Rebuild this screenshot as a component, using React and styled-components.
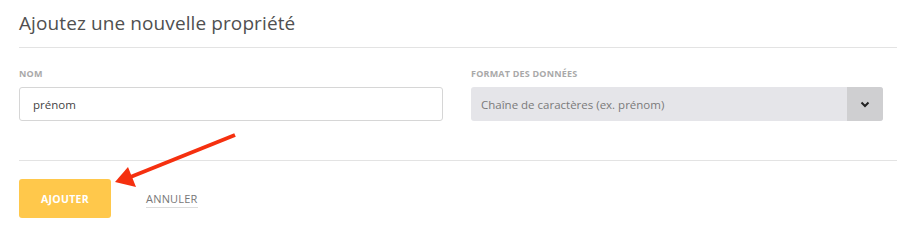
import React from "react";
import styled, { createGlobalStyle } from "styled-components";

const Global = createGlobalStyle`
  html, body { margin: 0; padding: 0; background: #fff; }
  body { font-family: "Open Sans", "Noto Sans", sans-serif; }
`;

const Page = styled.div`
  position: relative;
  width: 915px;
  height: 233px;
  padding: 0 18px 0 19px;
  box-sizing: border-box;
`;

const Title = styled.h1`
  margin: 0;
  padding-top: 10px;
  height: 47px;
  box-sizing: border-box;
  font-size: 19px;
  font-weight: 400;
  color: #505050;
  letter-spacing: 0.1px;
`;

const Divider = styled.hr`
  margin: 0;
  border: 0;
  border-top: 1px solid #e3e3e3;
`;

const Fields = styled.div`
  display: grid;
  grid-template-columns: 424px 412px;
  column-gap: 28px;
  padding-top: 20px;
  padding-bottom: 39px;
`;

const Field = styled.div`
  display: flex;
  flex-direction: column;
`;

const Label = styled.label`
  font-size: 9px;
  font-weight: 700;
  color: #a9a9a9;
  letter-spacing: 0.2px;
  height: 19px;
  line-height: 12px;
`;

const Input = styled.div`
  height: 34px;
  box-sizing: border-box;
  border: 1px solid #d6d6d6;
  border-radius: 3px;
  display: flex;
  align-items: center;
  padding-left: 13px;
  font-size: 11.5px;
  color: #444;
`;

const Select = styled.div`
  height: 34px;
  display: flex;
  border-radius: 3px;
  overflow: hidden;
  background: #e5e5e9;
`;

const SelectValue = styled.div`
  flex: 1;
  display: flex;
  align-items: center;
  padding-left: 10px;
  font-size: 11.5px;
  color: #7a7a7a;
`;

const SelectToggle = styled.div`
  width: 36px;
  background: #cfcfd1;
  display: flex;
  align-items: center;
  justify-content: center;
`;

const Actions = styled.div`
  display: flex;
  align-items: center;
  gap: 35px;
  padding-top: 18px;
`;

const PrimaryButton = styled.button`
  width: 92px;
  height: 39px;
  border: 0;
  border-radius: 3px;
  background: #ffc84b;
  color: #fff;
  font-family: inherit;
  font-size: 10.5px;
  font-weight: 700;
  letter-spacing: 0.3px;
`;

const LinkButton = styled.button`
  background: none;
  border: 0;
  padding: 0 0 1px;
  border-bottom: 1px solid #dcdcdc;
  font-family: inherit;
  font-size: 11px;
  color: #777;
  letter-spacing: 0.2px;
  margin-top: 2px;
`;

const Annotation = styled.svg`
  position: absolute;
  left: 0;
  top: 0;
  pointer-events: none;
`;

export default function App() {
  return (
    <>
      <Global />
      <Page>
        <Title>Ajoutez une nouvelle propriété</Title>
        <Divider />
        <Fields>
          <Field>
            <Label>NOM</Label>
            <Input>prénom</Input>
          </Field>
          <Field>
            <Label>FORMAT DES DONNÉES</Label>
            <Select>
              <SelectValue>Chaîne de caractères (ex. prénom)</SelectValue>
              <SelectToggle>
                <svg width="10" height="7" viewBox="0 0 10 7">
                  <path d="M1.5 1.5 L5 5 L8.5 1.5" fill="none" stroke="#222" strokeWidth="2" />
                </svg>
              </SelectToggle>
            </Select>
          </Field>
        </Fields>
        <Divider />
        <Actions>
          <PrimaryButton>AJOUTER</PrimaryButton>
          <LinkButton>ANNULER</LinkButton>
        </Actions>
        <Annotation width="915" height="233" viewBox="0 0 915 233">
          <line x1="235" y1="135" x2="128" y2="178" stroke="#f5300f" strokeWidth="4" />
          <polygon points="115,182 128,167 136,187" fill="#f5300f" />
        </Annotation>
      </Page>
    </>
  );
}
